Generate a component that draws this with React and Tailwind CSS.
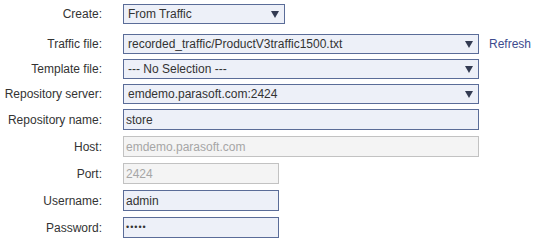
import React from "react";

const font = { fontFamily: '"Liberation Sans", Arial, sans-serif' };

function Arrow() {
  return (
    <svg width="8" height="7" viewBox="0 0 8 7" className="shrink-0">
      <polygon points="0,0 8,0 4,7" fill="#333b52" />
    </svg>
  );
}

function Select({ value, width }) {
  return (
    <div
      className={`flex items-center justify-between h-[20px] ${width} border border-[#5a6c98] bg-[#edf0f8] pl-[4px] pr-[5px] text-[12px] text-[#333]`}
    >
      <span className="whitespace-nowrap">{value}</span>
      <Arrow />
    </div>
  );
}

function Input({ value, width, disabled, small }) {
  return (
    <div
      className={`flex items-center h-[21px] ${width} border pl-[2px] ${
        small ? "text-[9px] tracking-[1px]" : "text-[12px]"
      } ${
        disabled
          ? "border-[#c2c2c2] bg-[#f4f4f4] text-[#a6a6a6]"
          : "border-[#5a6c98] bg-[#edf0f8] text-[#333]"
      }`}
    >
      <span className="whitespace-nowrap">{value}</span>
    </div>
  );
}

function Row({ label, children, className }) {
  return (
    <div className={`flex items-center ${className}`}>
      <div className="w-[102px] text-right text-[12px] text-[#333] whitespace-nowrap">
        {label}
      </div>
      <div className="ml-[21px] flex items-center">{children}</div>
    </div>
  );
}

export default function App() {
  return (
    <div className="w-[535px] h-[244px] bg-white pt-[4px]" style={font}>
      <Row label="Create:" className="mb-[10px]">
        <Select value="From Traffic" width="w-[162px]" />
      </Row>
      <Row label="Traffic file:" className="mb-[5px]">
        <Select value="recorded_traffic/ProductV3traffic1500.txt" width="w-[356px]" />
        <span className="ml-[10px] text-[12px] text-[#3d4b8e]">Refresh</span>
      </Row>
      <Row label="Template file:" className="mb-[5px]">
        <Select value="--- No Selection ---" width="w-[356px]" />
      </Row>
      <Row label="Repository server:" className="mb-[5px]">
        <Select value="emdemo.parasoft.com:2424" width="w-[356px]" />
      </Row>
      <Row label="Repository name:" className="mb-[6px]">
        <Input value="store" width="w-[356px]" />
      </Row>
      <Row label="Host:" className="mb-[6px]">
        <Input value="emdemo.parasoft.com" width="w-[356px]" disabled />
      </Row>
      <Row label="Port:" className="mb-[6px]">
        <Input value="2424" width="w-[156px]" disabled />
      </Row>
      <Row label="Username:" className="mb-[6px]">
        <Input value="admin" width="w-[156px]" />
      </Row>
      <Row label="Password:">
        <Input value="•••••" width="w-[156px]" small />
      </Row>
    </div>
  );
}
